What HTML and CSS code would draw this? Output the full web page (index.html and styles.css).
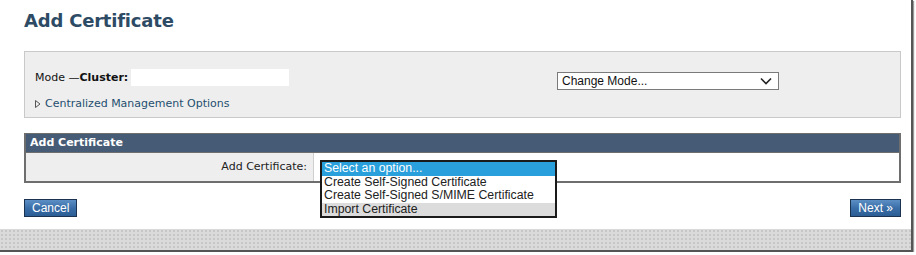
FILE: index.html
```html
<!DOCTYPE html>
<html>
<head>
<meta charset="utf-8">
<link rel="stylesheet" href="styles.css">
</head>
<body>
<div class="frame">
  <div class="content">
    <h1 class="title">Add Certificate</h1>
    <div class="mode-box">
      <div class="mode-row">
        <div class="mode-label">Mode —<b>Cluster:</b><span class="cluster-field"></span></div>
        <div class="fake-select"><span>Change Mode...</span><svg class="chev" width="12" height="8" viewBox="0 0 12 8"><path d="M1 1.5 L6 6.5 L11 1.5" fill="none" stroke="#222" stroke-width="1.6"/></svg></div>
      </div>
      <div class="cmo"><svg class="tri" width="6" height="8" viewBox="0 0 6 8"><path d="M0.5 0.5 L5 4 L0.5 7.5 Z" fill="none" stroke="#555" stroke-width="1"/></svg><span>Centralized Management Options</span></div>
    </div>
    <div class="panel">
      <div class="panel-head">Add Certificate</div>
      <div class="panel-row">
        <div class="row-label">Add Certificate:</div>
        <div class="row-value">
          <ul class="listbox">
            <li class="opt selected">Select an option...</li>
            <li class="opt">Create Self-Signed Certificate</li>
            <li class="opt">Create Self-Signed S/MIME Certificate</li>
            <li class="opt hover">Import Certificate</li>
          </ul>
        </div>
      </div>
    </div>
    <div class="buttons">
      <button class="btn">Cancel</button>
      <button class="btn">Next »</button>
    </div>
  </div>
  <div class="band"></div>
</div>
</body>
</html>
```
FILE: styles.css
```css
html, body {
  margin: 0;
  padding: 0;
  background: #fff;
}
.frame {
  width: 911px;
  height: 250px;
  border-right: 2px solid #555;
  border-bottom: 2px solid #555;
  box-shadow: 1px 1px 1px #999;
  box-sizing: content-box;
  display: flex;
  flex-direction: column;
  font-family: "DejaVu Sans", Verdana, sans-serif;
}
.content {
  padding: 0 10px 0 24px;
  height: 229px;
  box-sizing: border-box;
}
.title {
  margin: 0;
  padding-top: 9px;
  font-size: 18px;
  line-height: 24px;
  font-weight: bold;
  color: #2e4b65;
  letter-spacing: -0.2px;
}
.mode-box {
  margin-top: 18px;
  height: 67px;
  box-sizing: border-box;
  background: #eeeeee;
  border: 1px solid #c9c9c9;
  padding: 15px 0 0 10px;
}
.mode-row {
  display: grid;
  grid-template-columns: 522px 222px;
  align-items: center;
  height: 18px;
}
.mode-label {
  font-size: 11px;
  color: #111;
  display: flex;
  align-items: center;
  margin-top: -3px;
}
.mode-label b {
  font-weight: bold;
}
.cluster-field {
  display: inline-block;
  width: 158px;
  height: 17px;
  background: #fff;
  margin-left: 3px;
}
.fake-select {
  height: 18px;
  box-sizing: border-box;
  border: 1px solid #7a7a7a;
  background: #fff;
  display: flex;
  align-items: center;
  justify-content: space-between;
  padding: 0 6px 0 4px;
  font-family: "Liberation Sans", Arial, sans-serif;
  font-size: 12px;
  color: #111;
  margin-top: 5px;
}
.cmo {
  margin-top: 12px;
  display: flex;
  align-items: center;
  gap: 4px;
  font-size: 11px;
  color: #1f4f6e;
}
.tri { margin-top: 1px; }
.panel {
  margin-top: 15px;
  border: 2px solid #6e6e6e;
  border-top-width: 1px;
}
.panel-head {
  background: #465b75;
  color: #fff;
  font-weight: bold;
  font-size: 11px;
  height: 18px;
  line-height: 18px;
  padding-left: 4px;
}
.panel-row {
  display: grid;
  grid-template-columns: 288px 1fr;
  height: 28px;
  border-top: 1px solid #6e6e6e;
}
.row-label {
  background: #eeeeee;
  font-size: 11px;
  color: #222;
  text-align: right;
  padding-right: 6px;
  padding-top: 7px;
  border-right: 1px solid #cfcfcf;
}
.row-value {
  background: #fff;
  position: relative;
}
.listbox {
  position: absolute;
  left: 6px;
  top: 7px;
  width: 233px;
  margin: 0;
  padding: 0;
  list-style: none;
  border: 2px solid #1a1a1a;
  background: #fff;
  font-family: "Liberation Sans", Arial, sans-serif;
  font-size: 12.3px;
  color: #222;
  z-index: 2;
}
.opt {
  height: 13.5px;
  line-height: 13px;
  padding-left: 2px;
  white-space: nowrap;
}
.opt.selected {
  background: #29a0dc;
  color: #fff;
}
.opt.hover {
  background: #dcdcdc;
}
.buttons {
  display: flex;
  justify-content: space-between;
  margin-top: 16px;
}
.btn {
  height: 18px;
  padding: 0 7px;
  border: 1px solid #1b3350;
  background: linear-gradient(#5c8fc4, #3a6ea8 50%, #2c5d95);
  color: #fff;
  font-family: "Liberation Sans", Arial, sans-serif;
  font-size: 12px;
  line-height: 15px;
  border-radius: 0;
}
.band {
  flex: 1;
  background-color: #dadada;
  background-image: radial-gradient(circle, #c6c6c6 0.8px, transparent 1.1px);
  background-size: 4px 4px;
}
```
